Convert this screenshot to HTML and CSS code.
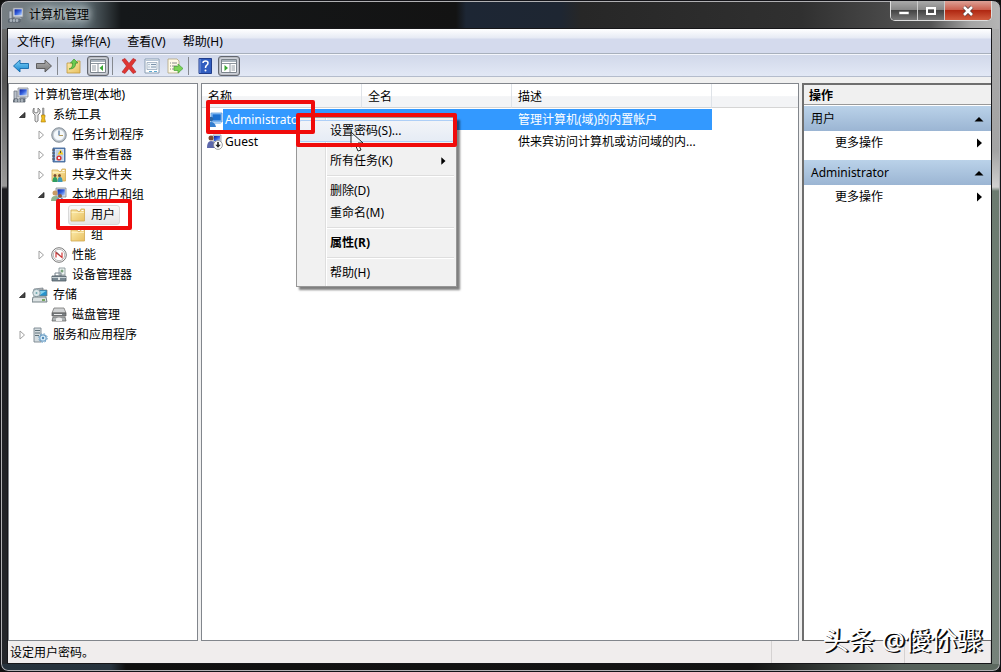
FILE: index.html
```html
<!DOCTYPE html>
<html lang="zh-CN">
<head>
  <meta charset="UTF-8" />
  <meta name="viewport" content="width=device-width, initial-scale=1.0" />
  <title>计算机管理</title>
  <link rel="stylesheet" href="styles.css">
</head>
<body>
  <svg class="defs" aria-hidden="true">
    <defs>
      <linearGradient id="gFolder" x1="0" y1="0" x2="1" y2="1"><stop offset="0" stop-color="#fdeeb0"/><stop offset="1" stop-color="#e8c060"/></linearGradient>
      <linearGradient id="gScreen" x1="0" y1="0" x2="1" y2="1"><stop offset="0" stop-color="#0a1f9c"/><stop offset=".5" stop-color="#3560dd"/><stop offset="1" stop-color="#b8d4ff"/></linearGradient>
      <linearGradient id="gBlue" x1="0" y1="0" x2="0" y2="1"><stop offset="0" stop-color="#7fd2f8"/><stop offset="1" stop-color="#1583cf"/></linearGradient>
      <linearGradient id="gGray" x1="0" y1="0" x2="0" y2="1"><stop offset="0" stop-color="#b5b5b5"/><stop offset="1" stop-color="#747474"/></linearGradient>
    </defs>
    <symbol id="computer" viewBox="0 0 16 16">
      <path d="M5 1h10v9H5z" fill="#d9dde2" stroke="#858b93" stroke-width=".8"/>
      <path d="M6.5 2.3h7.3v6H6.5z" fill="url(#gScreen)"/>
      <path d="M1 4h3v8H1z" fill="#b9c0ca" stroke="#6f7782" stroke-width=".8"/>
      <path d="M7 10h5l2 2H6z" fill="#9aa2ad"/>
      <path d="M1 12h11v3H0z" fill="#7a858f" stroke="#4b555e" stroke-width=".7"/>
      <path d="M3 12v3M6 12v3M9 12v3" stroke="#d6dce2"/>
    </symbol>
    <symbol id="tools" viewBox="0 0 16 16">
      <path d="M2 1v4l2 1 2-1V1l2 2v3L6 8v6q-2 2-3 0V8L1 6V3z" fill="#e8e8e8" stroke="#777" stroke-width=".9"/>
      <path d="M10.500 1h1.500v7h-1.500z" fill="#aaa" stroke="#777" stroke-width=".5"/>
      <path d="M9.500 8h3.500v2l-.5 1 1 4H9l1-4-.5-1z" fill="#f0bd20" stroke="#a97900" stroke-width=".6"/>
    </symbol>
    <symbol id="clock" viewBox="0 0 16 16">
      <circle cx="8" cy="8" r="7.3" fill="#b4bcc4" stroke="#75808a" stroke-width=".8"/>
      <circle cx="8" cy="8" r="5.6" fill="#f4f8fb" stroke="#c1cad1" stroke-width=".6"/>
      <path d="M8 3.500V8.500" fill="none" stroke="#4d7197" stroke-width="1.200"/>
      <path d="M8 8.500h4" stroke="#b39a5c"/>
    </symbol>
    <symbol id="events" viewBox="0 0 16 16">
      <path d="M2 1h12v14H2z" fill="#5d86bd" stroke="#3b5d8e" stroke-width=".8"/>
      <path d="M4 2h9v12H4z" fill="#d3e1f2"/>
      <path d="M5 4h7M5 6h7M5 8h7M5 10h7M5 12h7" stroke="#8fa9cc" stroke-width=".7"/>
      <path d="M9.500 2.500l3 5h-6z" fill="#f6cc22"/><path d="M9.500 4v2" stroke="#333" stroke-width=".8"/>
      <circle cx="8" cy="11" r="2.600" fill="#da3333"/><path d="M7 10l2 2M9 10l-2 2" stroke="#fff" stroke-width=".9"/>
      <path d="M1 3h3M1 6h3M1 9h3M1 12h3" stroke="#555"/>
    </symbol>
    <symbol id="folder" viewBox="0 0 16 16">
      <path d="M1 3h6l1 1.500h2L11 2h3.500v12H1z" fill="url(#gFolder)" stroke="#d0a850" stroke-width=".8"/>
      <path d="M11.500 3.500h2" stroke="#fff"/>
      <path d="M1.500 5.500h12.500" stroke="#fff5cc" stroke-width=".7"/>
    </symbol>
    <symbol id="shared" viewBox="0 0 16 16">
      <use href="#folder"/>
      <circle cx="4" cy="8.500" r="1.500" fill="#7c5033"/><circle cx="8.500" cy="8.500" r="1.500" fill="#7c5033"/>
      <path d="M1.500 15q0-5 2.500-5t2.500 5z" fill="#2f9f61"/><path d="M6.500 15q0-5 2.500-5t2.500 5z" fill="#3e9ab4"/>
    </symbol>
    <symbol id="users" viewBox="0 0 16 16">
      <path d="M5 1h10v9H5z" fill="#d9dde2" stroke="#858b93" stroke-width=".8"/><path d="M6.500 2.300h7.300v6.200H6.500z" fill="url(#gScreen)"/>
      <circle cx="4" cy="6" r="2.500" fill="#c99a62"/><path d="M0 14q0-5 4-5t4 5z" fill="#8fb58c"/>
      <circle cx="9" cy="9" r="2" fill="#8a5a3c"/><path d="M5 15.500q0-5 4-5t4.500 5z" fill="#5d86c4"/><path d="M8 11h2l-1 3z" fill="#fff"/>
    </symbol>
    <symbol id="user" viewBox="0 0 16 16">
      <path d="M4 1h11v9H4z" fill="#8fc3fa" stroke="#5e9ad8" stroke-width=".8"/><path d="M5.500 2.300h8.300v6.200H5.500z" fill="#1c70d0"/>
      <path d="M8 10h5l1 2H7z" fill="#a9d0f5"/>
      <circle cx="4" cy="7" r="2.300" fill="#2b65a5"/><path d="M0 15q0-5 4-5t5 5z" fill="#347fcf"/>
    </symbol>
    <symbol id="guest" viewBox="0 0 16 16">
      <path d="M6 1h8v7H6z" fill="#dce2ec" stroke="#8791a0" stroke-width=".7"/><path d="M7 2h6v5H7z" fill="url(#gScreen)"/>
      <circle cx="4" cy="4" r="2.500" fill="#7b4b35"/><path d="M0 14q0-7 4-7t5 7z" fill="#5c67ab"/>
      <circle cx="11" cy="11" r="4.400" fill="#fff" stroke="#888" stroke-width=".8"/><path d="M11 8v3.500" stroke="#222" stroke-width="1.600"/><path d="M8.300 10.800h5.400L11 13.800z" fill="#222"/>
    </symbol>
    <symbol id="perf" viewBox="0 0 16 16">
      <circle cx="8" cy="8" r="7.300" fill="#fff" stroke="#777"/>
      <circle cx="8" cy="8" r="5.700" fill="none" stroke="#999" stroke-width=".7"/>
      <path d="M5 10.500V5.500l6 5V5.500" fill="none" stroke="#cf3a3a" stroke-width="1.200"/><path d="M5 4.500l4 4" stroke="#444" stroke-width=".7"/>
    </symbol>
    <symbol id="device" viewBox="0 0 16 16">
      <path d="M8 1h6v7H8z" fill="#edf2f2" stroke="#7f8d91" stroke-width=".8"/><circle cx="11" cy="4" r="1.500" fill="#78a37c"/>
      <path d="M4 6h6v3H4z" fill="none" stroke="#76838c"/>
      <path d="M1 9h14v5H1z" fill="#788892" stroke="#4e5a62" stroke-width=".8"/><path d="M1 10.500h14" stroke="#c7d1d5"/><path d="M7 10h2v3H7z" fill="#e0e5e6"/>
    </symbol>
    <symbol id="storage" viewBox="0 0 16 16">
      <path d="M2 2l9-1v5H1z" fill="#bac1c7" stroke="#6d777e" stroke-width=".7"/>
      <path d="M7 3h8v6H7z" fill="#2693cd" stroke="#777" stroke-width=".7"/><path d="M8 4h6L8 8z" fill="#82d1ef"/>
      <circle cx="4.500" cy="6" r="3.700" fill="#d9e5e8" stroke="#7e9299" stroke-width=".8"/><circle cx="4.500" cy="6" r="1" fill="#6fa8ad"/>
      <path d="M1 10h13l1 5H0z" fill="#dbe1e2" stroke="#68767b" stroke-width=".9"/><path d="M10 12h3v2h-3z" fill="#77a85e"/>
    </symbol>
    <symbol id="disk" viewBox="0 0 16 16">
      <path d="M3 1h10l2 5H1z" fill="#d0d2d3" stroke="#777" stroke-width=".8"/><path d="M1 6h14v3H1z" fill="#7e8386" stroke="#555" stroke-width=".7"/>
      <path d="M3 7.500h8" stroke="#eee"/><path d="M2 10h12l1 4H1z" fill="#aeb3b4" stroke="#666" stroke-width=".8"/><path d="M5 11.500q3-2 6 0V14H5z" fill="#eee"/>
    </symbol>
    <symbol id="services" viewBox="0 0 16 16">
      <path d="M2 1h7v14H2z" fill="#d3dbdf" stroke="#78868e" stroke-width=".9"/><path d="M3 3.500h5M3 6h5M3 8.500h4" stroke="#60727b"/>
      <circle cx="11" cy="11" r="3.200" fill="#d9ecf8" stroke="#6c9fc6" stroke-width="1.200"/><circle cx="11" cy="11" r="4.300" fill="none" stroke="#6c9fc6" stroke-dasharray="1.600 1.800"/><circle cx="11" cy="11" r="1.200" fill="#5089b6"/>
    </symbol>
    <symbol id="back" viewBox="0 0 16 16"><path d="M.500 8L7 2v3.500h8.500v5H7V14z" fill="url(#gBlue)" stroke="#1469a9" stroke-width=".9"/></symbol>
    <symbol id="forward" viewBox="0 0 16 16"><path d="M15.500 8L9 2v3.500H.500v5H9V14z" fill="url(#gGray)" stroke="#555" stroke-width=".9"/></symbol>
    <symbol id="up" viewBox="0 0 16 16">
      <path d="M1 5h5l1 1h3l1-3h3v12H1z" fill="url(#gFolder)" stroke="#bf973e" stroke-width=".8"/>
      <path d="M3 11q4-1 3.500-6H4.500L8 1l4 4h-2.500q.500 6-6.500 6z" fill="#6ccb50" stroke="#3f9430" stroke-width=".7"/>
    </symbol>
    <symbol id="paneLeft" viewBox="0 0 16 16">
      <path d="M.500 1.500h15v13H.500z" fill="#fff" stroke="#7b838b"/><path d="M1 3h14" stroke="#a9b3bc" stroke-width="2"/><path d="M1 5.500h14M8 6v8" stroke="#8c959d"/>
      <path d="M2 8h4M2 10h4M2 12h4" stroke="#929ca4"/><path d="M13 7v6L9.500 10z" fill="#36a630"/>
    </symbol>
    <symbol id="paneRight" viewBox="0 0 16 16">
      <path d="M.500 1.500h15v13H.500z" fill="#fff" stroke="#7b838b"/><path d="M1 3h14" stroke="#a9b3bc" stroke-width="2"/><path d="M1 5.500h14M9 6v8" stroke="#8c959d"/>
      <path d="M10.500 8H14M10.500 10H14M10.500 12H14" stroke="#929ca4"/><path d="M3.500 7v6L7 10z" fill="#36a630"/>
    </symbol>
    <symbol id="delete" viewBox="0 0 16 16"><path d="M1 2l3-1.500 4 5 4-5 3 1.500-4.500 6L15 14l-3 1.500-4-5-4 5L1 14l4.500-6z" fill="#e03532" stroke="#b52a2a" stroke-width=".7"/></symbol>
    <symbol id="props" viewBox="0 0 16 16">
      <path d="M1 1h14v14H1z" fill="#fff" stroke="#899db2"/><path d="M1.500 2.500h13" stroke="#b8c7d7"/><path d="M3 4.500h10v7H3z" fill="#eef3f8" stroke="#899db2" stroke-width=".7"/>
      <path d="M4.500 6.500h1M7 6.500h5M4.500 9h1M7 9h5" stroke="#7d94aa"/><path d="M5 13.500h3M10 13.500h3" stroke="#5fa9cf"/>
    </symbol>
    <symbol id="export" viewBox="0 0 16 16">
      <path d="M1 1h9l2 2v12H1z" fill="#fffbe9" stroke="#b1a57e" stroke-width=".8"/><path d="M3 5h1M5 5h5M3 8h1M5 8h5M3 11h1M5 11h4" stroke="#888"/>
      <path d="M7 8.500h4V6l5 4.500-5 4.500v-2.500H7z" fill="#7bd455" stroke="#48a03a" stroke-width=".7"/>
    </symbol>
    <symbol id="help" viewBox="0 0 16 16">
      <path d="M2 .500h12.500v15H2z" fill="#315dc0" stroke="#213d8b"/><path d="M3 1v14" stroke="#829fe0"/>
      <path d="M6 5q0-2 2.500-2T11 5q0 1.500-1.500 2.500-1 .600-1 2.500" fill="none" stroke="#fff" stroke-width="1.500"/><circle cx="8.500" cy="12.500" r="1" fill="#fff"/>
    </symbol>
    <symbol id="closed" viewBox="0 0 12 12"><path d="M4 2v8l4.500-4z" fill="#fff" stroke="#a0a0a0"/></symbol>
    <symbol id="open" viewBox="0 0 12 12"><path d="M9 3.500v5H3.500z" fill="#444" stroke="#222" stroke-width=".8"/></symbol>
    <symbol id="upTri" viewBox="0 0 12 12"><path d="M1.500 8.500h9L6 4z"/></symbol>
    <symbol id="rightTri" viewBox="0 0 12 12"><path d="M4 1.500v9L9 6z"/></symbol>
  </svg>

  <div class="window">
    <header class="titlebar">
      <h1><svg class="icon"><use href="#computer"/></svg>计算机管理</h1>
      <div class="controls">
        <button class="min" aria-label="最小化"><svg viewBox="0 0 16 16"><path d="M3 8.500h10v3H3z" fill="#fff" stroke="#555" stroke-width=".6"/></svg></button>
        <button class="max" aria-label="最大化"><svg viewBox="0 0 16 16"><path d="M4 5h8v6H4z" fill="none" stroke="#fff" stroke-width="2"/></svg></button>
        <button class="close" aria-label="关闭"><svg viewBox="0 0 16 16"><path d="M4 4l8 8M12 4l-8 8" stroke="#553a38" stroke-width="4"/><path d="M4 4l8 8M12 4l-8 8" stroke="#fff" stroke-width="2.600"/></svg></button>
      </div>
    </header>

    <div class="client">
      <nav class="menubar">
        <button>文件(F)</button>
        <button>操作(A)</button>
        <button>查看(V)</button>
        <button>帮助(H)</button>
      </nav>

      <div class="toolbar">
        <button aria-label="后退"><svg class="icon"><use href="#back"/></svg></button>
        <button aria-label="前进"><svg class="icon"><use href="#forward"/></svg></button>
        <span class="divider"></span>
        <button aria-label="向上"><svg class="icon"><use href="#up"/></svg></button>
        <button class="pressed" aria-label="控制台树"><svg class="icon"><use href="#paneLeft"/></svg></button>
        <span class="divider"></span>
        <button aria-label="删除"><svg class="icon"><use href="#delete"/></svg></button>
        <button aria-label="属性"><svg class="icon"><use href="#props"/></svg></button>
        <button aria-label="导出列表"><svg class="icon"><use href="#export"/></svg></button>
        <span class="divider"></span>
        <button aria-label="帮助"><svg class="icon"><use href="#help"/></svg></button>
        <button class="pressed" aria-label="操作窗格"><svg class="icon"><use href="#paneRight"/></svg></button>
      </div>

      <main class="panes">
        <aside class="pane tree">
          <div class="row root"><svg class="icon"><use href="#computer"/></svg><span>计算机管理(本地)</span></div>
          <ul>
            <li>
              <div class="row"><button aria-label="折叠"><svg><use href="#open"/></svg></button><svg class="icon"><use href="#tools"/></svg><span>系统工具</span></div>
              <ul>
                <li class="row"><button aria-label="展开"><svg><use href="#closed"/></svg></button><svg class="icon"><use href="#clock"/></svg><span>任务计划程序</span></li>
                <li class="row"><button aria-label="展开"><svg><use href="#closed"/></svg></button><svg class="icon"><use href="#events"/></svg><span>事件查看器</span></li>
                <li class="row"><button aria-label="展开"><svg><use href="#closed"/></svg></button><svg class="icon"><use href="#shared"/></svg><span>共享文件夹</span></li>
                <li>
                  <div class="row"><button aria-label="折叠"><svg><use href="#open"/></svg></button><svg class="icon"><use href="#users"/></svg><span>本地用户和组</span></div>
                  <ul>
                    <li class="row leaf"><div class="current"><svg class="icon"><use href="#folder"/></svg><span>用户</span></div></li>
                    <li class="row leaf"><svg class="icon"><use href="#folder"/></svg><span>组</span></li>
                  </ul>
                </li>
                <li class="row"><button aria-label="展开"><svg><use href="#closed"/></svg></button><svg class="icon"><use href="#perf"/></svg><span>性能</span></li>
                <li class="row leaf"><svg class="icon"><use href="#device"/></svg><span>设备管理器</span></li>
              </ul>
            </li>
            <li>
              <div class="row"><button aria-label="折叠"><svg><use href="#open"/></svg></button><svg class="icon"><use href="#storage"/></svg><span>存储</span></div>
              <ul>
                <li class="row leaf"><svg class="icon"><use href="#disk"/></svg><span>磁盘管理</span></li>
              </ul>
            </li>
            <li class="row"><button aria-label="展开"><svg><use href="#closed"/></svg></button><svg class="icon"><use href="#services"/></svg><span>服务和应用程序</span></li>
          </ul>
        </aside>

        <section class="pane list">
          <table>
            <thead>
              <tr><th class="name">名称</th><th class="full">全名</th><th class="desc">描述</th><th></th></tr>
            </thead>
            <tbody>
              <tr class="selected"><td><div class="cell"><svg class="icon"><use href="#user"/></svg>Administrator</div></td><td></td><td>管理计算机(域)的内置帐户</td><td></td></tr>
              <tr><td><div class="cell"><svg class="icon"><use href="#guest"/></svg>Guest</div></td><td></td><td>供来宾访问计算机或访问域的内...</td><td></td></tr>
            </tbody>
          </table>
        </section>

        <aside class="pane actions">
          <h2>操作</h2>
          <button class="group">用户<svg><use href="#upTri"/></svg></button>
          <button class="more">更多操作<svg><use href="#rightTri"/></svg></button>
          <button class="group">Administrator<svg><use href="#upTri"/></svg></button>
          <button class="more">更多操作<svg><use href="#rightTri"/></svg></button>
        </aside>
      </main>

      <footer class="status"><span>设定用户密码。</span><span></span><span></span></footer>
    </div>
  </div>

  <div class="context-menu">
    <button class="hover">设置密码(S)...</button>
    <hr>
    <button>所有任务(K)<svg><use href="#rightTri"/></svg></button>
    <hr>
    <button>删除(D)</button>
    <button>重命名(M)</button>
    <hr>
    <button class="default">属性(R)</button>
    <hr>
    <button>帮助(H)</button>
  </div>
  <svg class="cursor" viewBox="0 0 14 22"><path d="M1 1v15l4-3 3 7 3-1-3-7h5z" fill="#fff" fill-opacity=".5" stroke="#222"/></svg>

  <div class="mark mark-account"></div>
  <div class="mark mark-command"></div>
  <div class="mark mark-folder"></div>
  <div class="watermark">头条 @僾伱骤</div>
</body>
</html>
```
FILE: styles.css
```css
* {
  box-sizing: border-box;
}
body {
  margin: 0;
  background: #111;
  color: #000;
  font: 12px/20px "Noto Sans", "Noto Sans CJK SC", sans-serif;
}
button {
  margin: 0;
  padding: 0;
  border: none;
  background: none;
  color: inherit;
  font: inherit;
}
svg {
  display: block;
  flex: none;
}
ul {
  margin: 0;
  padding: 0;
  list-style: none;
}
.defs {
  position: absolute;
  width: 0;
  height: 0;
}
.icon {
  width: 16px;
  height: 16px;
}

/* window frame */
.window {
  display: flex;
  flex-direction: column;
  height: 100vh;
  padding: 0 8px 7px 6px;
  border: 1px solid #15151a;
  border-radius: 8px;
  background:
    linear-gradient(to right, #777e83 0, #65747b 80px, #15181a 120px, #131313 455px, #1d2634 465px, #1e2632 560px, #272727 580px, #303030 800px, #555 930px, #a5a5a5 970px, #b5b5b5) top / 100% 28px no-repeat,
    linear-gradient(to right, #26323c 0, #28343e 110px, #101010 125px, #141414 750px, #55605a 900px, #5d6a60) bottom / 100% 7px no-repeat,
    linear-gradient(#aaa 0, #a3a3a3 150px, #d0d0d0 186px, #6c7b70 190px, #76827a) right / 10px 100% no-repeat,
    linear-gradient(#777 0, #555 80px, #999 185px, #1c1c20 188px, #24262a);
  box-shadow: inset 0 0 0 1px #b0b0b3;
}
.titlebar {
  display: flex;
  justify-content: space-between;
  height: 27px;
}
.titlebar h1 {
  display: flex;
  align-items: center;
  gap: 5px;
  margin: 0;
  padding-left: 1px;
  font-size: 12px;
  font-weight: normal;
  text-shadow: 0 0 8px #fff, 0 0 8px #cdd;
}
.controls {
  display: flex;
  align-self: flex-start;
  height: 20px;
  border: 1px solid #ddd;
  border-top: none;
  border-radius: 0 0 5px 5px;
  background: #444;
  overflow: hidden;
}
.controls button {
  display: flex;
  align-items: center;
  justify-content: center;
  width: 27px;
  border-right: 1px solid #ccc;
  background: linear-gradient(#aaa 0, #888 45%, #444 50%, #777);
}
.controls .close {
  width: 46px;
  border: none;
  background: linear-gradient(#dda196 0, #cb6251 45%, #b02812 50%, #d25c3e);
}
.controls svg {
  width: 16px;
  height: 16px;
}
.client {
  display: flex;
  flex: 1;
  flex-direction: column;
  min-height: 0;
  border: 1px solid #17171a;
  background: #f0f0f0;
}

/* menu bar and toolbar */
.menubar {
  display: flex;
  gap: 17px;
  height: 25px;
  padding: 2px 9px 0;
  border-bottom: 1px solid #a8b0bc;
  background: linear-gradient(#fff 0, #e6eaf4 9px, #d4daed 10px, #d4daed);
}
.toolbar {
  display: flex;
  align-items: center;
  gap: 3px;
  height: 23px;
  padding: 0 3px;
  border-top: 1px solid #f4f6fc;
  border-bottom: 1px solid #b4bccc;
  background: linear-gradient(#d1d8ea, #e2e8f5);
}
.toolbar button {
  display: flex;
  align-items: center;
  justify-content: center;
  width: 20px;
  height: 20px;
}
.toolbar .pressed {
  width: 22px;
  border: 1px solid #62666f;
  border-radius: 3px;
  background: #d2d6df;
  box-shadow: inset 0 0 2px #777;
}
.toolbar .divider {
  width: 1px;
  height: 18px;
  margin-right: 3px;
  background: #85898f;
}

/* three panes */
.panes {
  display: grid;
  flex: 1;
  grid-template-columns: 190px minmax(0, 1fr) 189px;
  gap: 3px;
  min-height: 0;
  padding-top: 6px;
}
.pane {
  border: 1px solid #82868c;
  background: #fff;
  overflow: hidden;
}
.tree {
  padding-top: 1px;
}
.tree > ul {
  padding-left: 7px;
}
.tree ul ul {
  padding-left: 19px;
}
.row {
  display: flex;
  align-items: center;
  height: 20px;
  white-space: nowrap;
}
.row button {
  margin-right: 4px;
}
.row button svg {
  width: 12px;
  height: 12px;
}
.row .icon {
  margin-right: 5px;
}
.root {
  padding-left: 4px;
}
.leaf {
  padding-left: 16px;
}
.current {
  display: flex;
  align-items: center;
  height: 20px;
  margin-left: -2px;
  padding: 0 4px 0 1px;
  border: 1px solid #d9d9d9;
  border-radius: 3px;
  background: linear-gradient(#fafafa, #e5e5e5);
}

.list table {
  width: 100%;
  border-collapse: separate;
  border-spacing: 0;
  table-layout: fixed;
}
.list th {
  height: 24px;
  padding: 2px 6px 0;
  border-right: 1px solid #dfe3e8;
  border-bottom: 1px solid #d5d5d5;
  background: linear-gradient(#fff 50%, #f3f4f6 55%, #f3f4f6);
  font-weight: normal;
  text-align: left;
}
.list th:last-child {
  border-right: none;
}
.list .name {
  width: 160px;
}
.list .full {
  width: 150px;
}
.list .desc {
  width: 200px;
}
.list td {
  height: 22px;
  padding: 0 5px 0 6px;
  border-top: 1px solid #fff;
  white-space: nowrap;
}
.list td:first-child {
  padding-left: 5px;
}
.cell {
  display: flex;
  align-items: center;
  gap: 2px;
}
.selected td {
  background: #39f;
  color: #fff;
}
.selected td:first-child {
  background: linear-gradient(to right, #fff 21px, #39f 21px);
}
.selected td:last-child {
  background: none;
}

.actions {
  border-width: 2px 0 1px 2px;
  border-color: #6e6e6e;
}
.actions h2 {
  height: 20px;
  margin: 0 0 1px;
  padding-left: 5px;
  border-bottom: 1px solid #999;
  background: #f0f0f0;
  font-size: 12px;
  line-height: 22px;
}
.actions button {
  display: flex;
  align-items: center;
  justify-content: space-between;
  width: 100%;
  height: 25px;
  padding: 0 6px 0 7px;
  text-align: left;
}
.actions .group {
  background: linear-gradient(#bad2e9, #9bb5d3);
}
.actions .more {
  height: 24px;
  margin-bottom: 5px;
  padding-left: 31px;
}
.actions svg {
  width: 12px;
  height: 12px;
}

.status {
  display: flex;
  height: 22px;
  background: #f0eded;
  line-height: 24px;
}
.status span {
  width: 133px;
  border-right: 1px solid #d5d2d2;
}
.status span:first-child {
  flex: 1;
  padding-left: 2px;
}
.status span:last-child {
  width: 86px;
}

/* popup over the list */
.context-menu {
  position: absolute;
  top: 117px;
  left: 296px;
  width: 161px;
  padding: 2px;
  border: 1px solid #979797;
  background: linear-gradient(to right, #f1f1f1 28px, #dedede 28px, #dedede 29px, #fff 29px, #fff 30px, #f1f1f1 30px);
  box-shadow: 3px 3px 2px rgba(0, 0, 0, .5);
}
.context-menu button {
  display: flex;
  align-items: center;
  justify-content: space-between;
  width: 100%;
  height: 22px;
  padding: 0 6px 0 31px;
  text-align: left;
}
.context-menu .hover {
  border: 1px solid #aecff7;
  padding-left: 30px;
  border-radius: 2px;
  background: linear-gradient(#f2f4f8, #e6ecf5);
}
.context-menu .default {
  font-weight: bold;
}
.context-menu hr {
  height: 2px;
  margin: 3px 0 3px 28px;
  border: none;
  border-top: 1px solid #dedede;
  background: #fff;
}
.context-menu svg {
  width: 10px;
  height: 10px;
}
.cursor {
  position: absolute;
  top: 131px;
  left: 350px;
  width: 14px;
  height: 22px;
}

/* red highlight boxes */
.mark {
  position: absolute;
  border: 4px solid #f00b0b;
  border-radius: 2px;
}
.mark-account {
  top: 100px;
  left: 206px;
  width: 109px;
  height: 34px;
}
.mark-command {
  top: 113px;
  left: 296px;
  width: 161px;
  height: 34px;
}
.mark-folder {
  top: 199px;
  left: 56px;
  width: 76px;
  height: 31px;
}
.watermark {
  position: absolute;
  right: 18px;
  bottom: 14px;
  color: #fff;
  font-size: 26px;
  line-height: 36px;
  text-shadow: 1px 1px 0 #000, 2px 1px 0 #222;
}
```
